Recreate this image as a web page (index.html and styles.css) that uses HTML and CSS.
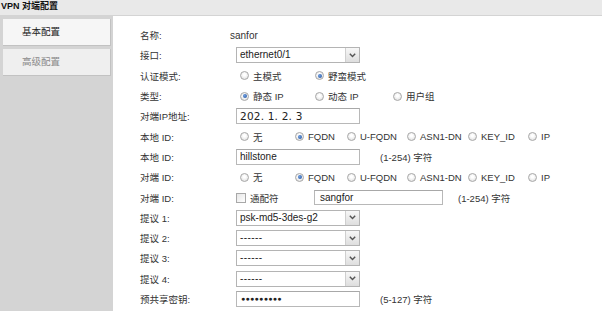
FILE: index.html
```html
<!DOCTYPE html>
<html>
<head>
<meta charset="utf-8">
<link rel="stylesheet" href="styles.css">
</head>
<body>
<div class="titlebar">VPN 对端配置</div>
<div class="main">
  <div class="side">
    <div class="tab active">基本配置</div>
    <div class="tab">高级配置</div>
  </div>
  <div class="content">
    <div class="form">
      <div class="lbl">名称:</div>
      <div class="ctl"><span class="plain">sanfor</span></div>

      <div class="lbl">接口:</div>
      <div class="ctl"><div class="select"><span class="val">ethernet0/1</span><span class="arrow"><svg width="7" height="5" viewBox="0 0 7 5"><polyline points="0.8,0.8 3.5,3.6 6.2,0.8" fill="none" stroke="#555" stroke-width="1.4"/></svg></span></div></div>

      <div class="lbl">认证模式:</div>
      <div class="ctl radios">
        <span class="ri w75"><i class="radio"></i>主模式</span>
        <span class="ri"><i class="radio on"></i>野蛮模式</span>
      </div>

      <div class="lbl">类型:</div>
      <div class="ctl radios">
        <span class="ri w75"><i class="radio on"></i>静态 IP</span>
        <span class="ri w78"><i class="radio"></i>动态 IP</span>
        <span class="ri"><i class="radio"></i>用户组</span>
      </div>

      <div class="lbl">对端IP地址:</div>
      <div class="ctl"><div class="input ip">202. 1. 2. 3</div></div>

      <div class="lbl">本地 ID:</div>
      <div class="ctl radios">
        <span class="ri w55"><i class="radio"></i>无</span>
        <span class="ri w52"><i class="radio on"></i>FQDN</span>
        <span class="ri w60"><i class="radio"></i>U-FQDN</span>
        <span class="ri w61"><i class="radio"></i>ASN1-DN</span>
        <span class="ri w60"><i class="radio"></i>KEY_ID</span>
        <span class="ri"><i class="radio"></i>IP</span>
      </div>

      <div class="lbl">本地 ID:</div>
      <div class="ctl"><div class="input">hillstone</div><span class="hint">(1-254) 字符</span></div>

      <div class="lbl">对端 ID:</div>
      <div class="ctl radios">
        <span class="ri w55"><i class="radio"></i>无</span>
        <span class="ri w52"><i class="radio on"></i>FQDN</span>
        <span class="ri w60"><i class="radio"></i>U-FQDN</span>
        <span class="ri w61"><i class="radio"></i>ASN1-DN</span>
        <span class="ri w60"><i class="radio"></i>KEY_ID</span>
        <span class="ri"><i class="radio"></i>IP</span>
      </div>

      <div class="lbl">对端 ID:</div>
      <div class="ctl"><span class="chk"><i class="box"></i>通配符</span><div class="input peer">sangfor</div><span class="hint h2">(1-254) 字符</span></div>

      <div class="lbl">提议 1:</div>
      <div class="ctl"><div class="select"><span class="val">psk-md5-3des-g2</span><span class="arrow"><svg width="7" height="5" viewBox="0 0 7 5"><polyline points="0.8,0.8 3.5,3.6 6.2,0.8" fill="none" stroke="#555" stroke-width="1.4"/></svg></span></div></div>

      <div class="lbl">提议 2:</div>
      <div class="ctl"><div class="select"><span class="val dash">------</span><span class="arrow"><svg width="7" height="5" viewBox="0 0 7 5"><polyline points="0.8,0.8 3.5,3.6 6.2,0.8" fill="none" stroke="#555" stroke-width="1.4"/></svg></span></div></div>

      <div class="lbl">提议 3:</div>
      <div class="ctl"><div class="select"><span class="val dash">------</span><span class="arrow"><svg width="7" height="5" viewBox="0 0 7 5"><polyline points="0.8,0.8 3.5,3.6 6.2,0.8" fill="none" stroke="#555" stroke-width="1.4"/></svg></span></div></div>

      <div class="lbl">提议 4:</div>
      <div class="ctl"><div class="select"><span class="val dash">------</span><span class="arrow"><svg width="7" height="5" viewBox="0 0 7 5"><polyline points="0.8,0.8 3.5,3.6 6.2,0.8" fill="none" stroke="#555" stroke-width="1.4"/></svg></span></div></div>

      <div class="lbl">预共享密钥:</div>
      <div class="ctl"><div class="input pw">●●●●●●●●●</div><span class="hint">(5-127) 字符</span></div>
    </div>
  </div>
</div>
</body>
</html>
```
FILE: styles.css
```css
html, body {
  margin: 0;
  padding: 0;
}
body {
  width: 602px;
  height: 311px;
  overflow: hidden;
  font-family: "Liberation Sans", "Noto Sans CJK SC", sans-serif;
  font-size: 10px;
  color: #333;
  background: #d4d4d4;
}
.titlebar {
  height: 15px;
  line-height: 13px;
  background: #e9e9e9;
  font-weight: bold;
  font-size: 9px;
  color: #111;
  padding-left: 1px;
  box-sizing: border-box;
}
.main {
  display: flex;
  height: 296px;
}
.side {
  width: 113px;
  flex: none;
  background: #d4d4d4;
  padding: 4px 2px 0 3px;
  box-sizing: border-box;
  display: flex;
  flex-direction: column;
  gap: 3px;
}
.tab {
  height: 27px;
  line-height: 26px;
  padding-left: 19px;
  background: #efefef;
  border-right: 1px solid #c2c2c2;
  border-bottom: 1px solid #c2c2c2;
  box-sizing: border-box;
  color: #8a8a8a;
  font-size: 9.5px;
}
.tab.active {
  background: #f6f6f6;
  color: #222;
}
.content {
  flex: 1;
  background: #fff;
  margin-top: 1px;
}
.form {
  display: grid;
  grid-template-columns: 96px 1fr;
  grid-auto-rows: 20.3px;
  padding: 9px 0 0 27px;
}
.lbl {
  display: flex;
  align-items: center;
  font-size: 9.5px;
  color: #333;
}
.ctl {
  display: flex;
  align-items: center;
  font-size: 9.5px;
}
.plain {
  margin-left: -6px;
  font-size: 10px;
  color: #333;
}
.select {
  width: 124px;
  height: 16px;
  border: 1px solid #b4b4b4;
  box-sizing: border-box;
  display: flex;
  background: #fff;
}
.select .val {
  flex: 1;
  padding-left: 3px;
  line-height: 14px;
  font-size: 10px;
  color: #222;
}
.select .val.dash {
  font-size: 10px;
  letter-spacing: 0.4px;
}
.arrow {
  width: 13px;
  border-left: 1px solid #cfcfcf;
  background: linear-gradient(#f7f7f7, #dedede);
  display: flex;
  align-items: center;
  justify-content: center;
}
.radios {
  padding-left: 4px;
}
.ri {
  display: inline-flex;
  align-items: center;
  gap: 4px;
  color: #333;
}
.w52 { width: 52px; }
.w55 { width: 55px; }
.w60 { width: 60px; }
.w61 { width: 61px; }
.w75 { width: 75px; }
.w78 { width: 78px; }
.radio {
  display: inline-block;
  width: 9px;
  height: 9px;
  border-radius: 50%;
  border: 1px solid #a8a8a8;
  background: radial-gradient(circle at 50% 40%, #ffffff 20%, #d9d9d9 100%);
  box-sizing: border-box;
  position: relative;
}
.radio.on::after {
  content: "";
  position: absolute;
  left: 1.5px;
  top: 1.5px;
  width: 4px;
  height: 4px;
  border-radius: 50%;
  background: radial-gradient(circle at 40% 40%, #6f9ee0, #1f4f9a);
}
.input {
  width: 124px;
  height: 16px;
  border: 1px solid #b8b8b8;
  border-top-color: #a8a8a8;
  box-sizing: border-box;
  padding-left: 3px;
  line-height: 14px;
  font-size: 10px;
  color: #222;
}
.input.ip {
  letter-spacing: 0.2px;
  font-family: "DejaVu Sans", "Liberation Sans", sans-serif;
  font-size: 10.5px;
}
.input.pw {
  font-size: 7px;
  letter-spacing: 0.3px;
  padding-left: 4px;
}
.input.peer {
  margin-left: 30px;
  width: 129px;
  height: 15px;
  padding-left: 5px;
}
.hint {
  margin-left: 20px;
  color: #333;
}
.hint.h2 {
  margin-left: 15px;
}
.chk {
  display: inline-flex;
  align-items: center;
  gap: 4px;
  width: 48px;
}
.box {
  display: inline-block;
  width: 10px;
  height: 10px;
  border: 1px solid #a8a8a8;
  box-sizing: border-box;
  background: linear-gradient(135deg, #e6e6e6, #ffffff);
}
```
